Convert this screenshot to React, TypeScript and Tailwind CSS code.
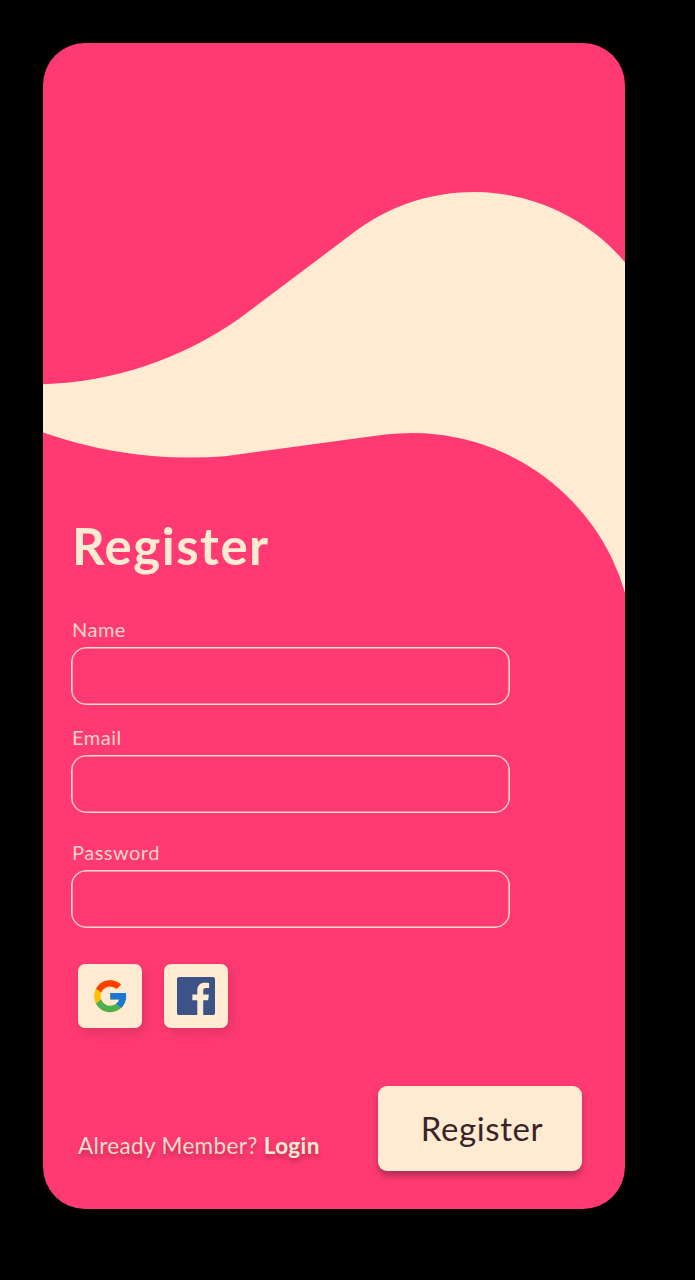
import React from "react";
import { FcGoogle } from "react-icons/fc";

function Wave() {
  return (
    <svg
      className="pointer-events-none absolute inset-0 h-full w-full"
      viewBox="43 43 582 1166"
      preserveAspectRatio="none"
      aria-hidden="true"
    >
      <path
        fill="#ffebd1"
        d="M42 384.2A362 362 0 0 0 239 318.8L356 230.8A198 198 0 0 1 626 263.5V596A222 222 0 0 0 385 434.6L225 456.2A445 445 0 0 1 42 432.2Z"
      />
    </svg>
  );
}

function FacebookLogo() {
  return (
    <svg className="size-[38px] fill-[#3b5387]" viewBox="0 0 24 24" aria-hidden="true">
      <path d="M22.676 0H1.324C.593 0 0 .593 0 1.324v21.352C0 23.408.593 24 1.324 24h11.494v-9.294H9.689v-3.621h3.129V8.41c0-3.099 1.894-4.785 4.659-4.785 1.325 0 2.464.097 2.796.141v3.24h-1.921c-1.5 0-1.792.721-1.792 1.771v2.311h3.584l-.465 3.63H16.56V24h6.115c.733 0 1.325-.592 1.325-1.324V1.324C24 .593 23.408 0 22.676 0" />
    </svg>
  );
}

function Field({ label, type }: { label: string; type: string }) {
  return (
    <label className="flex w-[439px] flex-col">
      <span className="h-[30px] pl-px text-[20px] leading-[24px] tracking-[0.5px] text-[#ffd3c6]">
        {label}
      </span>
      <input
        type={type}
        className="h-[58px] rounded-[15px] border border-[#ffdccb] bg-transparent px-4 text-xl text-[#ffebd1] shadow-[inset_0_0_0_0.6px_#ffdccb] outline-none"
      />
    </label>
  );
}

function SocialButton({ children }: { children: React.ReactNode }) {
  return (
    <button
      type="button"
      className="flex size-16 items-center justify-center rounded-[7px] bg-[#ffebd1] shadow-[3px_5px_12px_rgba(90,30,60,0.22)]"
    >
      {children}
    </button>
  );
}

export default function App() {
  return (
    <div className="h-[1280px] w-[695px] bg-black pt-[43px] pl-[43px] font-['Lato','Open_Sans',sans-serif]">
      <main className="relative h-[1166px] w-[582px] overflow-hidden rounded-[42px] bg-[#ff3a72]">
        <Wave />
        <form className="relative flex h-full flex-col pt-[473px] pl-[28px]">
          <h1 className="h-[101px] pl-px text-[51px] leading-[60px] font-bold tracking-[1.5px] text-[#ffebd1]">
            Register
          </h1>
          <Field label="Name" type="text" />
          <div className="mt-[20px]">
            <Field label="Email" type="email" />
          </div>
          <div className="mt-[27px]">
            <Field label="Password" type="password" />
          </div>
          <div className="mt-[36px] flex gap-[22px] pl-[7px]">
            <SocialButton>
              <FcGoogle size={38.4} />
            </SocialButton>
            <SocialButton>
              <FacebookLogo />
            </SocialButton>
          </div>
          <div className="mt-[58px] flex h-[85px] w-[511px] justify-between pl-[7px]">
            <p className="pt-[46px] text-[22.5px] leading-[28px] tracking-[0.35px] whitespace-nowrap text-[#ffdccb] [text-shadow:0_4px_4px_rgba(0,0,0,0.25)]">
              Already Member? <b className="font-bold text-[#ffebd1]">Login</b>
            </p>
            <button
              type="submit"
              className="h-[85px] w-[204px] rounded-[9px] bg-[#ffebd1] pl-[4px] text-[33px] tracking-[0.6px] text-[#3a2328] shadow-[0_5px_6px_rgba(60,30,50,0.4)]"
            >
              Register
            </button>
          </div>
        </form>
      </main>
    </div>
  );
}
